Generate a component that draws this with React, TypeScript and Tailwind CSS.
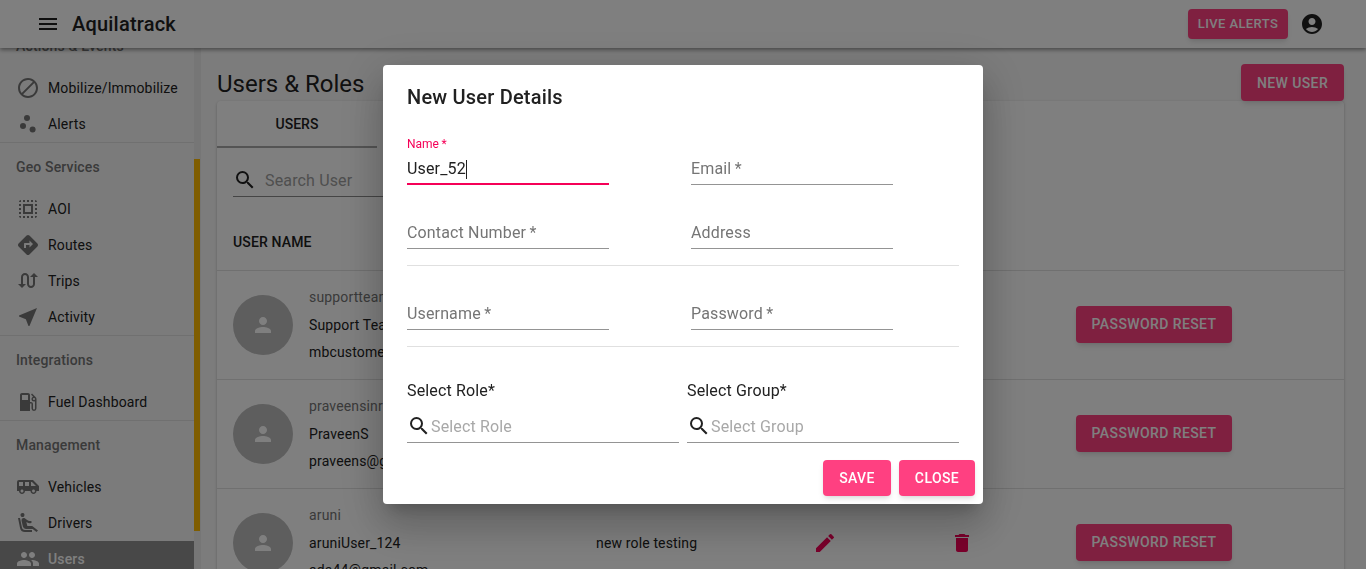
import type { ReactNode } from "react";
import {
  MdAccountCircle,
  MdAirlineSeatReclineExtra,
  MdAirportShuttle,
  MdBlock,
  MdDelete,
  MdDirections,
  MdEdit,
  MdLocalGasStation,
  MdMenu,
  MdNearMe,
  MdPeople,
  MdPerson,
  MdScatterPlot,
  MdSearch,
  MdSelectAll,
  MdSwapCalls,
} from "react-icons/md";

const ICON = "text-[#757575] shrink-0";

const NavItem = ({ icon, label, active }: { icon: ReactNode; label: string; active?: boolean }) => (
  <div className={`h-9 flex items-center pl-4 gap-2 text-sm tracking-[0.15px] ${active ? "bg-[#909090] text-white font-medium" : "text-[#212121]"}`}>
    <span className={`w-6 flex justify-center ${active ? "text-white" : ""}`}>{icon}</span>
    <span>{label}</span>
  </div>
);

const NavHeader = ({ label }: { label: string }) => (
  <div className="h-12 flex items-center pl-4 text-sm font-medium tracking-[0.15px] text-[#757575]">{label}</div>
);

const Divider = () => <div className="h-px bg-[#e0e0e0]" />;

const Sidebar = () => (
  <aside className="w-[201px] shrink-0 flex overflow-hidden">
    <div className="w-[194px] shrink-0 bg-[#f7f7f7]">
      <div className="-mt-[26px]">
        <NavHeader label="Actions & Events" />
        <NavItem icon={<MdBlock size={24} className={ICON} />} label="Mobilize/Immobilize" />
        <NavItem icon={<MdScatterPlot size={24} className={ICON} />} label="Alerts" />
        <Divider />
        <NavHeader label="Geo Services" />
        <NavItem icon={<MdSelectAll size={24} className={ICON} />} label="AOI" />
        <NavItem icon={<MdDirections size={24} className={ICON} />} label="Routes" />
        <NavItem icon={<MdSwapCalls size={24} className={ICON} />} label="Trips" />
        <NavItem icon={<MdNearMe size={24} className={ICON} />} label="Activity" />
        <Divider />
        <NavHeader label="Integrations" />
        <NavItem icon={<MdLocalGasStation size={24} className={ICON} />} label="Fuel Dashboard" />
        <Divider />
        <NavHeader label="Management" />
        <NavItem icon={<MdAirportShuttle size={24} className={ICON} />} label="Vehicles" />
        <NavItem icon={<MdAirlineSeatReclineExtra size={24} className={ICON} />} label="Drivers" />
        <NavItem icon={<MdPeople size={24} className="text-white" />} label="Users" active />
      </div>
    </div>
    <div className="w-[7px] shrink-0 bg-[#ececec] pt-[111px]">
      <div className="w-1.5 h-[372px] bg-[#ffbb00]" />
    </div>
  </aside>
);

const ResetButton = () => (
  <button className="w-[156px] h-[37px] rounded bg-[#ff4081] text-white text-sm font-medium tracking-[0.4px] shadow-md">
    PASSWORD RESET
  </button>
);

const UserRow = ({ login, name, email, role }: { login: string; name: string; email: string; role: string }) => (
  <div className="h-[109px] border-b border-[#e0e0e0] flex items-center pl-4 shrink-0">
    <div className="w-[60px] h-[60px] rounded-full bg-[#bdbdbd] flex items-center justify-center shrink-0">
      <MdPerson size={24} className="text-white" />
    </div>
    <div className="w-[303px] pl-4 text-sm tracking-[0.15px] text-[#212121] flex flex-col gap-[9px] self-start pt-[17px] shrink-0">
      <span className="leading-[18px] text-[#757575] mb-px">{login}</span>
      <span className="leading-[18px]">{name}</span>
      <span className="leading-[18px]">{email}</span>
    </div>
    <span className="w-[217px] text-sm tracking-[0.15px] text-[#212121] shrink-0">{role}</span>
    <MdEdit size={24} className="text-[#f50057] shrink-0" />
    <MdDelete size={24} className="text-[#f50057] shrink-0 ml-[113px]" />
    <div className="ml-[102px] mb-[2px]">
      <ResetButton />
    </div>
  </div>
);

const Main = () => (
  <main className="flex-1 min-w-0 pl-4 pr-[22px] bg-[#f9f9f9] overflow-hidden">
    <div className="h-[53px] flex items-start justify-between pt-4">
      <h1 className="text-2xl text-[#212121] leading-[40px]">Users &amp; Roles</h1>
      <button className="w-[103px] h-[37px] rounded bg-[#ff4081] text-white text-sm font-medium tracking-[0.4px] shadow-md">
        NEW USER
      </button>
    </div>
    <section className="rounded bg-white shadow-[0_1px_3px_rgba(0,0,0,0.25)] flex flex-col">
      <div className="flex h-[47px]">
        <div className="w-40 flex items-center justify-center text-sm font-medium text-[#212121] border-b-2 border-[#a8a8a8]">
          USERS
        </div>
      </div>
      <div className="pl-4 pt-[15px]">
        <div className="w-[300px] h-[34px] border-b border-[#8a8a8a] flex items-center gap-2 text-base tracking-[0.15px] text-[#9e9e9e]">
          <MdSearch size={24} className="text-[#212121] shrink-0" />
          <span className="pt-[2px]">Search User</span>
        </div>
      </div>
      <div className="h-[74px] pl-4 pb-[18px] flex items-end text-sm font-medium tracking-[0.15px] text-[#212121] border-b border-[#e0e0e0]">
        USER NAME
      </div>
      <UserRow login="supportteam" name="Support Team" email="mbcustomer@gmail.com" role="Admin" />
      <UserRow login="praveensinr" name="PraveenS" email="praveens@gmail.com" role="Admin" />
      <UserRow login="aruni" name="aruniUser_124" email="ada44@gmail.com" role="new role testing" />
    </section>
  </main>
);

const Field = ({ label, value }: { label: string; value?: string }) => (
  <div className="w-[202px]">
    {value ? (
      <>
        <div className="text-xs leading-[14px] text-[#f50057] pb-1">{label}</div>
        <div className="h-[30px] flex items-center text-base tracking-[0.15px] text-[#212121] border-b-2 border-[#f50057]">
          {value}
          <span className="w-px h-[19px] bg-[#212121]" />
        </div>
      </>
    ) : (
      <div className="h-12 flex items-end">
        <input
          readOnly
          placeholder={label}
          className="w-full h-[31px] pb-[2px] text-base tracking-[0.15px] border-b border-[#949494] outline-none placeholder:text-[#757575]"
        />
      </div>
    )}
  </div>
);

const SelectField = ({ label, placeholder }: { label: string; placeholder: string }) => (
  <div className="w-[272px]">
    <div className="text-base tracking-[0.15px] text-[#212121] leading-[24px]">{label}</div>
    <div className="mt-[7px] h-[33px] border-b border-[#949494] flex items-center text-base tracking-[0.15px] text-[#a8a8a8]">
      <MdSearch size={24} className="text-[#212121] shrink-0" />
      <span className="pt-[2px]">{placeholder}</span>
    </div>
  </div>
);

const NewUserDialog = () => (
  <div className="fixed inset-0 z-20 bg-black/50 flex items-center justify-center">
    <div className="w-[600px] h-[439px] bg-white rounded shadow-[0_11px_15px_-7px_rgba(0,0,0,0.2),0_24px_38px_3px_rgba(0,0,0,0.14),0_9px_46px_8px_rgba(0,0,0,0.12)] flex flex-col">
      <h2 className="px-6 pt-[18px] text-xl font-medium tracking-[0.2px] text-[#212121] leading-[28px]">New User Details</h2>
      <div className="px-6 pt-[26px] flex flex-col">
        <div className="flex gap-[82px]">
          <Field label={"Name\u2009*"} value="User_52" />
          <Field label={"Email\u2009*"} />
        </div>
        <div className="flex gap-[82px] mt-4">
          <Field label={"Contact Number\u2009*"} />
          <Field label="Address" />
        </div>
        <div className="h-px bg-[#e0e0e0] mt-4" />
        <div className="flex gap-[82px] mt-4">
          <Field label={"Username\u2009*"} />
          <Field label={"Password\u2009*"} />
        </div>
        <div className="h-px bg-[#e0e0e0] mt-4" />
        <div className="flex gap-2 mt-8">
          <SelectField label="Select Role*" placeholder="Select Role" />
          <SelectField label="Select Group*" placeholder="Select Group" />
        </div>
      </div>
      <div className="flex justify-end gap-2 pr-2 pt-[17px]">
        <button className="w-[68px] h-9 rounded bg-[#ff4081] text-white text-sm font-medium tracking-[0.4px] shadow-md">SAVE</button>
        <button className="w-[76px] h-9 rounded bg-[#ff4081] text-white text-sm font-medium tracking-[0.4px] shadow-md">CLOSE</button>
      </div>
    </div>
  </div>
);

export default function App() {
  return (
    <div className="h-[569px] w-[1366px] overflow-hidden flex flex-col font-['Roboto',sans-serif]">
      <header className="relative z-10 h-12 shrink-0 bg-white shadow-[0_2px_4px_rgba(0,0,0,0.4)] flex items-center pl-[36px] pr-[42px]">
        <MdMenu size={24} className="text-[#212121]" />
        <span className="ml-3 text-xl font-medium text-[#212121] tracking-[0.2px]">Aquilatrack</span>
        <button className="ml-auto w-[100px] h-[30px] rounded bg-[#ff4081] text-white text-[13px] font-medium tracking-[0.4px] shadow-md">
          LIVE ALERTS
        </button>
        <MdAccountCircle size={24} className="ml-3 text-[#212121]" />
      </header>
      <div className="flex flex-1 min-h-0">
        <Sidebar />
        <Main />
      </div>
      <NewUserDialog />
    </div>
  );
}
